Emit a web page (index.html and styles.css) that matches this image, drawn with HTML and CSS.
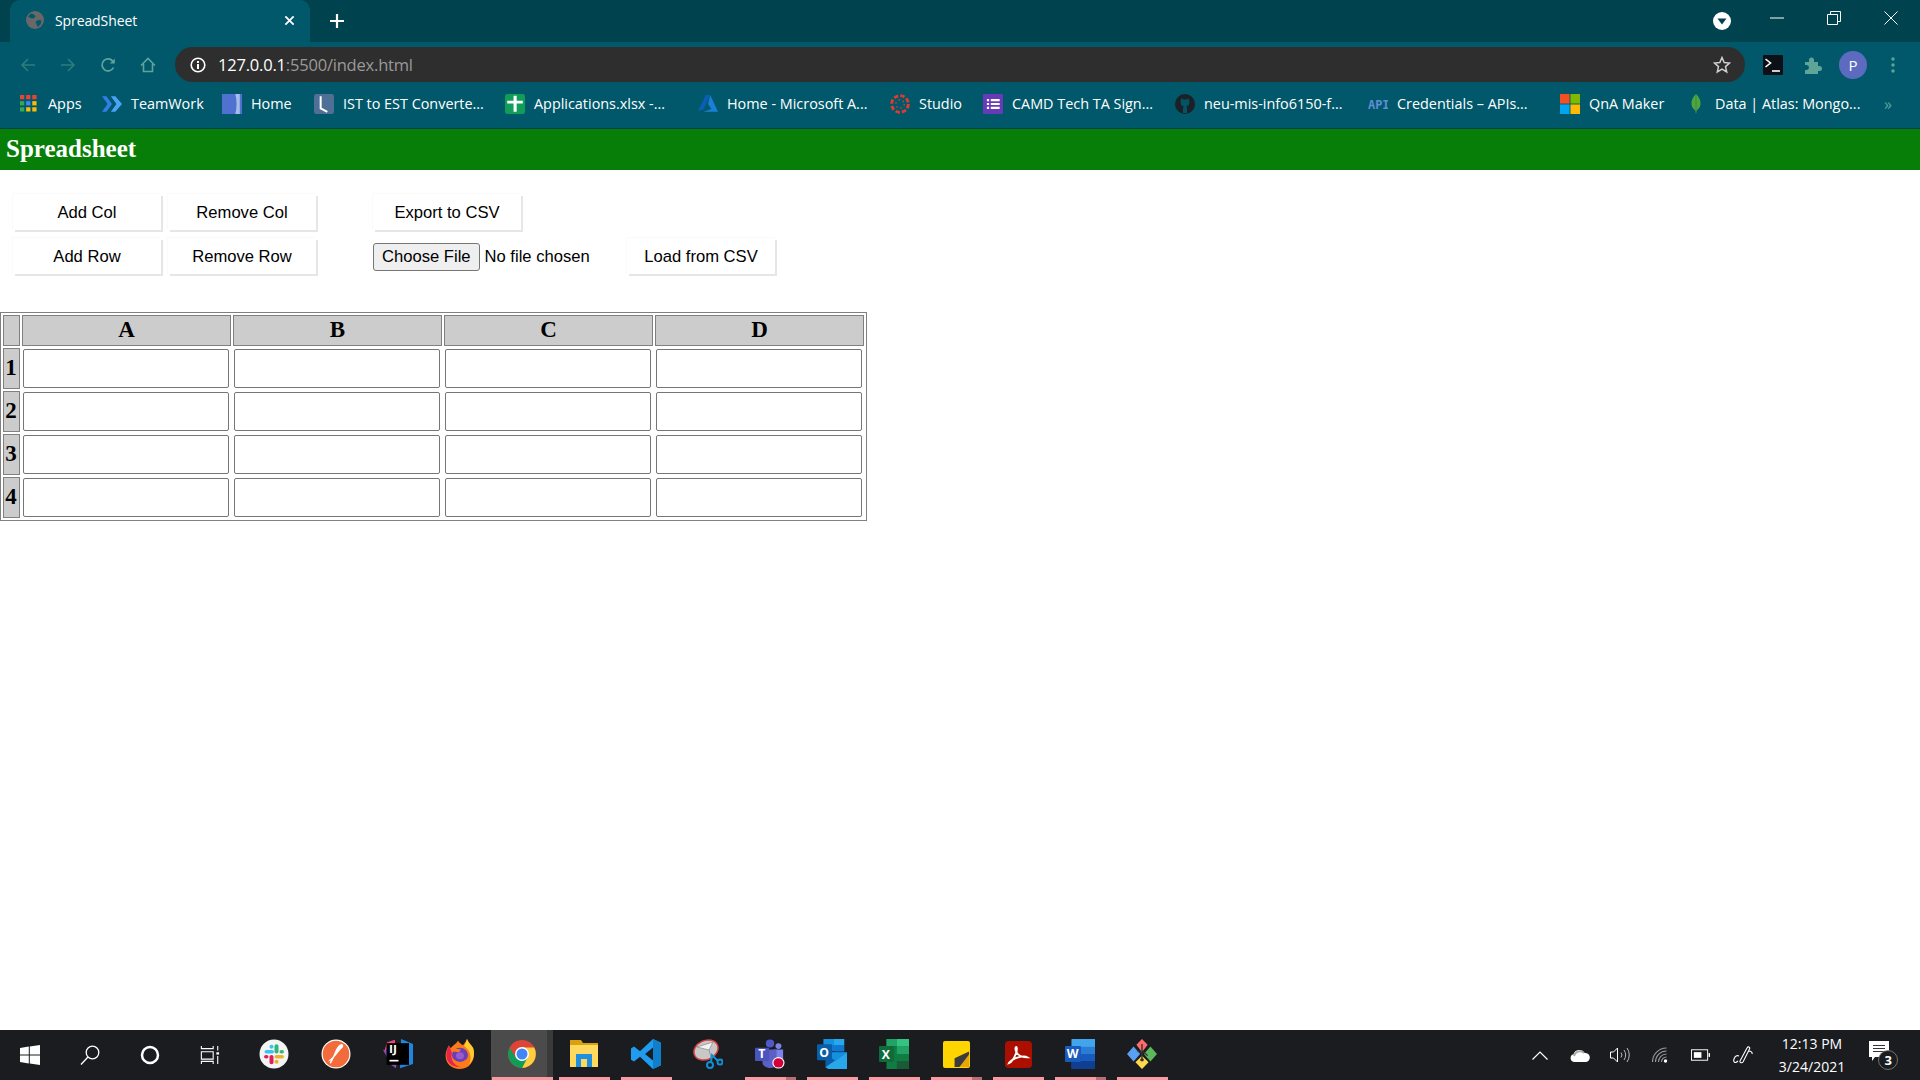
FILE: index.html
```html
<!DOCTYPE html>
<html lang="en">
<head>
<meta charset="utf-8">
<title>SpreadSheet</title>
<link rel="stylesheet" href="styles.css">
</head>
<body>
<div class="screen">
  <header class="tabstrip">
    <div class="tab">
      <svg class="favicon" viewBox="0 0 18 18"><circle cx="9" cy="9" r="9" fill="#686868"/><path d="M5 2.500l3 1 1.500 2-2 2-3-.5-2.500-1.500zM12 9l3.500.5-1 4-3 2.500-1-3-1-2z" fill="#01586b"/></svg>
      <span class="tab-title">SpreadSheet</span>
      <svg class="tab-close" viewBox="0 0 12 12"><path d="M1.500 1.500l9 9M10.500 1.500l-9 9" stroke="#fff" stroke-width="2"/></svg>
    </div>
    <svg class="new-tab" viewBox="0 0 16 16"><path d="M8 1v14M1 8h14" stroke="#fff" stroke-width="2.200"/></svg>
    <div class="window-controls">
      <svg class="media" viewBox="0 0 18 18"><circle cx="9" cy="9" r="9" fill="#fff"/><path d="M4.500 6.500h9L9 12.500z" fill="#01424f"/></svg>
      <svg class="winbtn" viewBox="0 0 14 14"><path d="M0 7h14" stroke="#fff"/></svg>
      <svg class="winbtn" viewBox="0 0 14 14"><path d="M.5 3.500h10v10H.5zM3.500 3.500V.5h10v10h-3" fill="none" stroke="#fff"/></svg>
      <svg class="winbtn" viewBox="0 0 14 14"><path d="M.5.5l13 13M13.500.5l-13 13" stroke="#fff"/></svg>
    </div>
  </header>

  <nav class="toolbar">
    <span class="tool"><svg viewBox="0 0 16 16" class="ico16"><path d="M15 8H2M8 2L2 8l6 6" fill="none" stroke="#2c7c80" stroke-width="1.600"/></svg></span>
    <span class="tool"><svg viewBox="0 0 16 16" class="ico16"><path d="M1 8h13M8 2l6 6-6 6" fill="none" stroke="#2c7c80" stroke-width="1.600"/></svg></span>
    <span class="tool"><svg viewBox="0 0 16 16" class="ico16"><path d="M13.500 10.500A6 6 0 1 1 13 4.500" fill="none" stroke="#5ea598" stroke-width="1.700"/><path d="M14.800 1.500v5h-5z" fill="#5ea598"/></svg></span>
    <span class="tool"><svg viewBox="0 0 16 16" class="ico16"><path d="M1 8.500L8 1.500l7 7M3.500 7v7.500h9V7" fill="none" stroke="#5ea598" stroke-width="1.600"/></svg></span>
    <div class="omnibox">
      <svg class="info" viewBox="0 0 16 16"><circle cx="8" cy="8" r="6.800" fill="none" stroke="#fff" stroke-width="1.600"/><path d="M7 7h2v5H7zM7 4h2v2H7z" fill="#fff"/></svg>
      <span class="url"><b class="host">127.0.0.1</b>:5500/index.html</span>
      <svg class="star" viewBox="0 0 18 18"><path d="M9 1.500l2.200 5 5.300.500-4 3.600 1.200 5.300L9 13.200l-4.700 2.700 1.200-5.300-4-3.600 5.300-.5z" fill="none" stroke="#cfcfcf" stroke-width="1.500"/></svg>
    </div>
    <div class="extensions">
      <span class="tool"><svg viewBox="0 0 20 20" class="ico20"><rect width="20" height="20" rx="1" fill="#0d1117"/><path d="M2.500 4l5 4-5 4" fill="none" stroke="#fff" stroke-width="1.600"/><path d="M9 16h8" stroke="#fff" stroke-width="1.600"/></svg></span>
      <span class="tool"><svg viewBox="0 0 18 18" class="ico18"><path d="M1 6h4V4a2.500 2.500 0 0 1 5 0v2h4v4h1.500a2.500 2.500 0 0 1 0 5H14v3H1v-4h1.500a2.500 2.500 0 0 0 0-5H1z" fill="#5ea598"/></svg></span>
      <span class="tool"><span class="avatar">P</span></span>
      <span class="tool"><svg viewBox="0 0 4 16" class="dots"><circle cx="2" cy="2" r="1.700" fill="#5ea598"/><circle cx="2" cy="8" r="1.700" fill="#5ea598"/><circle cx="2" cy="14" r="1.700" fill="#5ea598"/></svg></span>
    </div>
  </nav>

  <nav class="bookmarks">
    <a class="chip chip-apps"><svg viewBox="0 0 18 18" class="bm-apps"><path fill="#ea4335" d="M0 0h4.500v4.500H0zM6.500 0H11v4.500H6.500zM13 0h4.500v4.500H13z"/><path fill="#34a853" d="M0 6.500h4.500V11H0z"/><path fill="#4285f4" d="M6.500 6.500H11V11H6.500z"/><path fill="#fbbc05" d="M13 6.500h4.500V11H13z"/><path fill="#34a853" d="M0 13h4.500v4.500H0z"/><path fill="#fbbc05" d="M6.500 13H11v4.500H6.500zM13 13h4.500v4.500H13z"/></svg><span>Apps</span></a>
    <a class="chip"><svg viewBox="0 0 18 18" class="bm"><path d="M0 2h4l5 7-5 7H0l5-7z" fill="#2f7fe8"/><path d="M8 2h4l6 7-6 7H8l5-7z" fill="#4aa3f5"/></svg><span>TeamWork</span></a>
    <a class="chip"><svg viewBox="0 0 18 18" class="bm"><rect width="18" height="18" fill="#4f72d1"/><path d="M12 0h4v18h-4c1.500-6 1.500-12 0-18z" fill="#a8bce8"/></svg><span>Home</span></a>
    <a class="chip"><svg viewBox="0 0 18 18" class="bm"><rect width="18" height="18" rx="2" fill="#4f6f96"/><path d="M6 2v11l6 3" fill="none" stroke="#fff" stroke-width="1.800"/></svg><span>IST to EST Converte...</span></a>
    <a class="chip"><svg viewBox="0 0 18 18" class="bm"><rect width="18" height="18" rx="2" fill="#0f9d58"/><path d="M2 6h5.700V1.500h2.800V6H16v2.500h-5.500V16H7.700V8.500H2z" fill="#fff"/></svg><span>Applications.xlsx -...</span></a>
    <a class="chip"><svg viewBox="0 0 18 18" class="bm"><path d="M7 1h4L5 14l-5 1z" fill="#0a5fb4"/><path d="M11 1l7 15H5l7-2.500-3-4.500z" fill="#1a7fd6"/></svg><span>Home - Microsoft A...</span></a>
    <a class="chip"><svg viewBox="0 0 18 18" class="bm"><circle cx="9" cy="9" r="7.500" fill="none" stroke="#e13b2b" stroke-width="2.600" stroke-dasharray="4 1.900"/><circle cx="9" cy="9" r="3.800" fill="none" stroke="#e13b2b" stroke-width="1.200" stroke-dasharray="1.500 2.500"/></svg><span>Studio</span></a>
    <a class="chip"><svg viewBox="0 0 18 18" class="bm"><rect width="18" height="18" rx="1" fill="#673ab7"/><path fill="#fff" d="M3.500 4.500h2v2h-2zM7 4.500h8v2H7zM3.500 8h2v2h-2zM7 8h8v2H7zM3.500 11.500h2v2h-2zM7 11.500h8v2H7z"/></svg><span>CAMD Tech TA Sign...</span></a>
    <a class="chip"><svg viewBox="0 0 18 18" class="bm"><circle cx="9" cy="9" r="9" fill="#1b2126"/><path d="M5 7.500C5 5 6 4 6 4l2 1h2l2-1s1 1 1 3.500c0 2.500-1.500 3.500-3 3.800.6.500.8 1.200.8 2V17H7.200v-3.700c0-.8.200-1.500.8-2C6.500 11 5 10 5 7.500z" fill="#025566"/></svg><span>neu-mis-info6150-f...</span></a>
    <a class="chip"><svg viewBox="0 0 21 18" class="bm"><text x="0" y="14" class="api-text">API</text></svg><span>Credentials – APIs...</span></a>
    <a class="chip"><svg viewBox="0 0 18 18" class="bm"><path fill="#f25022" d="M0 0h8.600v8.600H0z"/><path fill="#7fba00" d="M9.400 0H18v8.600H9.400z"/><path fill="#00a4ef" d="M0 9.400h8.600V18H0z"/><path fill="#ffb900" d="M9.400 9.400H18V18H9.400z"/></svg><span>QnA Maker</span></a>
    <a class="chip"><svg viewBox="0 0 18 20" class="bm"><path d="M9 0c3 3 5 6.500 4.500 10.500-.3 3-2.500 5-3.800 6L9 20l-.7-3.500C7 15.500 4.800 13.500 4.500 10.500 4 6.500 6 3 9 0z" fill="#4ea643"/><path d="M9 1v18" stroke="#2f7f2a" stroke-width=".6"/></svg><span>Data | Atlas: Mongo...</span></a>
    <span class="more">»</span>
  </nav>

  <main class="page">
    <h1 class="title">Spreadsheet</h1>
    <section class="controls">
      <div class="control-row">
        <button class="btn">Add Col</button>
        <button class="btn">Remove Col</button>
        <button class="btn btn-io">Export to CSV</button>
      </div>
      <div class="control-row">
        <button class="btn">Add Row</button>
        <button class="btn">Remove Row</button>
        <input class="file" type="file">
        <button class="btn">Load from CSV</button>
      </div>
    </section>
    <table class="sheet">
      <thead><tr><th class="corner"></th><th>A</th><th>B</th><th>C</th><th>D</th></tr></thead>
      <tbody>
        <tr><th>1</th><td><input class="cell"></td><td><input class="cell"></td><td><input class="cell"></td><td><input class="cell"></td></tr>
        <tr><th>2</th><td><input class="cell"></td><td><input class="cell"></td><td><input class="cell"></td><td><input class="cell"></td></tr>
        <tr><th>3</th><td><input class="cell"></td><td><input class="cell"></td><td><input class="cell"></td><td><input class="cell"></td></tr>
        <tr><th>4</th><td><input class="cell"></td><td><input class="cell"></td><td><input class="cell"></td><td><input class="cell"></td></tr>
      </tbody>
    </table>
  </main>

  <footer class="taskbar">
    <div class="sys">
      <span class="sys-item"><svg viewBox="0 0 20 20" class="ico20"><path fill="#fff" d="M0 2.900l8.800-1.300v7.900H0zM9.800 1.500L20 0v9.500H9.800zM0 10.500h8.800v7.900L0 17.100zM9.800 10.500H20V20L9.800 18.500z"/></svg></span>
      <span class="sys-item"><svg viewBox="0 0 20 20" class="ico20"><circle cx="12.500" cy="7.500" r="6.300" fill="none" stroke="#fff" stroke-width="1.300"/><path d="M8 12L1 19.500" stroke="#fff" stroke-width="1.300"/></svg></span>
      <span class="sys-item"><svg viewBox="0 0 20 20" class="ico20"><circle cx="10" cy="10" r="8" fill="none" stroke="#fff" stroke-width="2.500"/></svg></span>
      <span class="sys-item"><svg viewBox="0 0 20 22" class="ico20"><path d="M.5 1v3h13V1M.5 7.500h13v8H.5zM.5 21v-3h13v3M18.500 1v5M18.500 12v9" fill="none" stroke="#fff" stroke-width="1.200"/><rect x="17" y="8" width="3" height="2.500" fill="#fff"/></svg></span>
    </div>
    <div class="apps">
      <span class="app"><svg viewBox="0 0 30 34" preserveAspectRatio="none" class="app-ico"><ellipse cx="15" cy="17" rx="14.500" ry="16.500" fill="#f4f4f4"/><path stroke-linecap="round" stroke-width="4" fill="none" stroke="#36c5f0" d="M7.500 14.500h5.500M12.500 8.500v.5"/><path stroke-linecap="round" stroke-width="4" fill="none" stroke="#2eb67d" d="M17.500 8v6.500M23 14.500h-.5"/><path stroke-linecap="round" stroke-width="4" fill="none" stroke="#ecb22e" d="M17.500 20h5.500M17.500 26v-.5"/><path stroke-linecap="round" stroke-width="4" fill="none" stroke="#e01e5a" d="M12.500 20v6.500M7 20h.5"/></svg></span>
      <span class="app"><svg viewBox="0 0 30 30" class="app-ico"><circle cx="15" cy="15" r="14.500" fill="#fff"/><circle cx="15" cy="15" r="13.300" fill="#f26b3a"/><path d="M21 5c2 1.300 1.500 3.500-1 5L13 18.500l-3 6-1.500-.5 1.500-2.500-3 1 5-5 3-7C17 7 19 4.500 21 5z" fill="#fff"/></svg></span>
      <span class="app"><svg viewBox="0 0 30 36" preserveAspectRatio="none" class="app-ico"><path d="M4 4l8-3v14L1 16z" fill="#f0447a"/><path d="M0 13l8 18 5 4 2-20z" fill="#8c4bb5"/><path d="M18 0l12 6v24l-13 5z" fill="#1f86e0"/><rect x="3.500" y="5" width="22.500" height="26" fill="#000"/><text x="6" y="17" class="ij-text">IJ</text><rect x="6.500" y="25" width="9" height="2" fill="#fff"/></svg></span>
      <span class="app"><svg viewBox="0 0 30 34" preserveAspectRatio="none" class="app-ico"><path d="M22 0c1 4 4 6 6 10 3 8 0 24-13 24C5 34-1 26 1 15c.5-3 2-6 3-8 0 2 1 3 2 3 2-3 6-5 7-8 2 3 3 4 5 5 1.500-2 3-4 4-7z" fill="#ff7a1a"/><path d="M22 0c1 4 4 6 6 10 2 6 1 14-4 19 3-7 2-16-5-21 1.500-2 2-5 3-8z" fill="#ffcb2e"/><path d="M4 7c-3 6-4 14 0 20 3 4 8 5 12 5-7-2-11-8-9-16z" fill="#e6254f"/><circle cx="15" cy="18" r="8" fill="#6b3fb5"/><circle cx="15" cy="19" r="4" fill="#9b59d0"/><path d="M6 14c3-3 7-3 10-2l-2 3z" fill="#ff7a1a"/></svg></span>
      <span class="app app-active"><svg viewBox="0 0 30 30" class="app-ico"><circle cx="15" cy="15" r="14" fill="#db4437"/><path d="M2.800 8.500A14 14 0 0 0 15 29l6.500-11.500L15 22 9 19z" fill="#0f9d58"/><path d="M15 29A14 14 0 0 0 27.200 8.500H15l6 6z" fill="#ffcd40"/><path d="M15 29l6.500-12-6 4-5.500-1z" fill="#0f9d58"/><circle cx="15" cy="15" r="7" fill="#fff"/><circle cx="15" cy="15" r="5.500" fill="#4285f4"/></svg></span>
      <span class="app run"><svg viewBox="0 0 30 30" class="app-ico"><path d="M1 1h11l2 3h15v24H1z" fill="#d8a111"/><path d="M1 6h28v22H1z" fill="#ffd95e"/><path d="M7 15h16v13h-5v-8h-6v8H7z" fill="#1f8fe0"/></svg></span>
      <span class="app run"><svg viewBox="0 0 30 32" preserveAspectRatio="none" class="app-ico"><path d="M22 0l8 4v24l-8 4L9 19l-6 5-3-2V10l3-2 6 5zM22 9l-8 7 8 7z" fill="#1f9cf0"/><path d="M22 0l8 4v24l-8 4z" fill="#0f7fcc"/></svg></span>
      <span class="app"><svg viewBox="0 0 30 30" class="app-ico"><ellipse cx="13" cy="11" rx="12.500" ry="9.500" transform="rotate(-25 13 11)" fill="#c8c8c8" stroke="#d64545" stroke-width="1.500"/><path d="M4 8l12 3 4-8zM16 11l2 7" fill="#f4f4f4" stroke="#777" stroke-width=".6"/><circle cx="17" cy="26" r="3" fill="none" stroke="#0f8fd6" stroke-width="2"/><circle cx="27" cy="23" r="2.500" fill="none" stroke="#0f8fd6" stroke-width="2"/><path d="M18 23l1-7 6 6" fill="none" stroke="#0f8fd6" stroke-width="2"/></svg></span>
      <span class="app run run-tail"><svg viewBox="0 0 32 34" preserveAspectRatio="none" class="app-ico"><circle cx="16" cy="5" r="4.500" fill="#5059c9"/><circle cx="25" cy="8" r="3.200" fill="#7b83eb"/><path d="M20 12h10v12c0 3-3 5-5 5h-5z" fill="#7b83eb"/><path d="M8 12h15v15c0 4-3 6-7 6s-8-3-8-6z" fill="#5b5fc7"/><rect y="10" width="15" height="15" rx="1" fill="#4b53bc"/><text x="3.500" y="22" class="ms-text">T</text><circle cx="25" cy="27" r="6.500" fill="#fff"/><circle cx="25" cy="27" r="5.300" fill="#d4003a"/></svg></span>
      <span class="app run"><svg viewBox="0 0 32 34" preserveAspectRatio="none" class="app-ico"><path d="M7 0h22v14H7z" fill="#0f78d4"/><path d="M7 0h11v7H7z" fill="#1490df"/><path d="M18 0h11v7H18z" fill="#28a8ea"/><path d="M18 7h11v7H18z" fill="#0f78d4"/><path d="M9 15h23v17H9z" fill="#0a5ea8"/><path d="M9 32l23-17v19H12z" fill="#28a8ea"/><path d="M32 15L20 25 9 17v-2z" fill="#1490df"/><rect y="6" width="16" height="18" rx="1" fill="#0a5ea8"/><text x="2.500" y="20.500" class="ms-text">O</text></svg></span>
      <span class="app run"><svg viewBox="0 0 32 34" preserveAspectRatio="none" class="app-ico"><path d="M8 0h24v34H8z" fill="#107c41"/><path d="M8 0h11v8H8z" fill="#21a366"/><path d="M19 0h13v8H19z" fill="#33c481"/><path d="M19 8h13v9H19z" fill="#21a366"/><path d="M19 25h13v9H19z" fill="#185c37"/><rect y="8" width="16" height="18" rx="1" fill="#0f6b3a"/><text x="3" y="22.500" class="ms-text">X</text></svg></span>
      <span class="app run run-tail"><svg viewBox="0 0 28 28" class="app-ico-sm"><rect width="28" height="28" rx="2" fill="#ffd400"/><path d="M12 27V18L27 11v14c0 1-1 2-2 2z" fill="#3b3b3b"/><path d="M27 14L17 27h8c1 0 2-1 2-2z" fill="#e8a40c"/></svg></span>
      <span class="app run"><svg viewBox="0 0 28 28" class="app-ico-sm"><rect width="28" height="28" rx="4" fill="#ac0f00"/><path d="M4 23c3-1 6-6 8-12 .6-3 .5-5-.5-5s-1 3 0 5c2 4 6 6 12 6-3-2-8-1-13 1-4 2-6 4-6.500 5z" fill="none" stroke="#fff" stroke-width="1.800"/></svg></span>
      <span class="app run run-tail"><svg viewBox="0 0 32 34" preserveAspectRatio="none" class="app-ico"><rect x="7" width="25" height="34" rx="1" fill="#185abd"/><path d="M7 0h25v9H7z" fill="#41a5ee"/><path d="M7 9h25v8H7z" fill="#2b7cd3"/><path d="M7 25h25v9H7z" fill="#103f91"/><rect y="8" width="17" height="18" rx="1" fill="#185abd"/><text x="1.800" y="22" class="ms-text">W</text></svg></span>
      <span class="app run"><svg viewBox="0 0 32 36" preserveAspectRatio="none" class="app-ico"><path d="M16 0l6 7-6 9-6-9z" fill="#ff6b6b"/><path d="M7 9l7 9-7 9-7-9z" fill="#5aa0f2"/><path d="M25 9l7 9-7 9-7-9z" fill="#5cb85c"/><path d="M16 20l7 8-7 8-7-8z" fill="#ffd84d"/><path d="M16 6v18M16 14l6 6M16 17l-5-3" stroke="#333" stroke-width="1.500"/><circle cx="16" cy="25" r="2" fill="#333"/></svg></span>
    </div>
    <div class="tray">
      <span class="tray-item"><svg viewBox="0 0 16 9" class="tray-chev"><path d="M.5 8.500L8 1l7.500 7.500" fill="none" stroke="#fff" stroke-width="1.200"/></svg></span>
      <span class="tray-item"><svg viewBox="0 0 20 13" class="tray-cloud"><path d="M4 13a4 4 0 0 1-.5-7.800A6 6 0 0 1 14.500 4 4.500 4.500 0 0 1 16 13z" fill="#fff"/><path d="M4 7a6 6 0 0 1 10-3" fill="none" stroke="#aaa" stroke-width="2"/></svg></span>
      <span class="tray-item"><svg viewBox="0 0 20 16" class="tray-vol"><path d="M.5 5h3l4-4v14l-4-4h-3z" fill="none" stroke="#fff"/><path d="M11 5.500a4 4 0 0 1 0 5M14 3a9 9 0 0 1 0 10M17 1a12 12 0 0 1 0 14" fill="none" stroke="#bbb"/></svg></span>
      <span class="tray-item"><svg viewBox="0 0 16 16" class="tray-wifi"><path d="M.5 15A14 14 0 0 1 14.500 1M3.500 15A11 11 0 0 1 14.500 4M6.500 15A8 8 0 0 1 14.500 7M9.500 15A5 5 0 0 1 14.500 10" fill="none" stroke="#9a9a9a" stroke-width="1.100"/><circle cx="13.500" cy="14" r="1.700" fill="#fff"/></svg></span>
      <span class="tray-item"><svg viewBox="0 0 20 12" class="tray-bat"><rect x=".5" y=".5" width="17" height="11" fill="none" stroke="#fff"/><rect x="3" y="3" width="8" height="6" fill="#fff"/><rect x="18.500" y="4" width="1.500" height="4" fill="#fff"/></svg></span>
      <span class="tray-item tray-pen"><svg viewBox="0 0 20 20" class="ico20"><path d="M5 16c-3 3-5 1-4-2s3-4 5-3M7 16L14 3c1-2 3.500-1 2.500 1L10 17c-1 1.500-3.500.5-3-1zM15.500 6c2.500 0 4 1.500 3.500 3" fill="none" stroke="#fff" stroke-width="1.100"/></svg></span>
      <div class="clock"><span>12:13 PM</span><span>3/24/2021</span></div>
      <span class="tray-item notif"><svg viewBox="0 0 30 30" class="notif-ico"><path d="M1 1h20v16H7l-3 4v-4H1z" fill="#fff"/><path d="M5 5.500h12M5 8.500h12M5 11.500h12" stroke="#333"/><circle cx="20" cy="20" r="9.500" fill="#1b1c1f" stroke="#888" stroke-width=".8"/><text x="16.500" y="25" class="notif-text">3</text></svg></span>
    </div>
  </footer>
</div>
</body>
</html>
```

FILE: styles.css
```css
* { box-sizing: border-box; }
html, body { margin: 0; padding: 0; height: 100%; }
body { font-family: "Liberation Sans", Arial, sans-serif; }
.screen { width: 1920px; height: 1080px; display: flex; flex-direction: column; overflow: hidden; background: #fff; }

/* browser chrome */
.tabstrip { height: 42px; background: #01424f; display: flex; align-items: flex-end; padding-left: 10px; color: #fff; flex: none; }
.tab { width: 300px; height: 42px; background: #01586b; border-radius: 10px 10px 0 0; display: flex; align-items: center; padding-left: 16px; padding-bottom: 2px; }
.favicon { width: 18px; height: 18px; flex: none; }
.tab-title { font: 14px "Open Sans", sans-serif; margin-left: 11px; flex: 1; letter-spacing: -0.1px; }
.tab-close { width: 11px; height: 11px; margin-right: 15px; }
.new-tab { width: 16px; height: 16px; margin-left: 19px; align-self: center; }
.window-controls { margin-left: auto; height: 42px; display: flex; align-items: flex-start; padding-right: 22px; }
.media { width: 18px; height: 18px; margin-top: 12px; margin-right: 39px; }
.winbtn { width: 14px; height: 14px; margin-top: 11px; margin-right: 43px; }
.winbtn:last-child { margin-right: 0; }

.toolbar { height: 40px; background: #01586b; display: flex; align-items: flex-end; padding-left: 8px; flex: none; }
.tool { width: 40px; height: 35px; display: flex; align-items: center; justify-content: center; flex: none; }
.ico16 { width: 16px; height: 16px; }
.ico18 { width: 18px; height: 18px; }
.ico20 { width: 20px; height: 20px; }
.dots { width: 4px; height: 16px; }
.omnibox { flex: 1; height: 35px; margin-left: 7px; background: #2e2e2e; border-radius: 18px; display: flex; align-items: center; padding: 0 13px 0 15px; }
.info { width: 16px; height: 16px; flex: none; }
.url { font: 16.500px "Open Sans", sans-serif; color: #9a9a9a; margin-left: 12px; letter-spacing: -0.2px; flex: 1; }
.host { color: #fff; font-weight: 400; }
.star { width: 18px; height: 18px; flex: none; margin-right: 1px; }
.extensions { display: flex; margin-left: 8px; padding-right: 7px; }
.avatar { width: 28px; height: 28px; border-radius: 50%; background: #5c6bc0; color: #fff; font: 15px "Open Sans", sans-serif; display: flex; align-items: center; justify-content: center; }

.bookmarks { height: 47px; background: #01586b; border-bottom: 1px solid #01424f; display: grid; grid-template-columns: 82px 120px 92px 191px 193px 192px 93px 192px 193px 192px 126px 198px 1fr; align-items: center; padding-left: 20px; padding-bottom: 3px; flex: none; color: #fff; font: 14.400px "Open Sans", sans-serif; letter-spacing: 0; }
.chip { display: flex; align-items: center; gap: 9px; white-space: nowrap; }
.chip-apps { gap: 11px; }
.bm { width: 20px; height: 20px; flex: none; }
.bm-apps { width: 17px; height: 17px; flex: none; }
.more { color: #5ea598; font-size: 16px; padding-left: 0; }
.api-text { font: bold 12.500px "DejaVu Sans Mono", monospace; fill: #5f8dd3; }

/* page */
.page { flex: 1; min-height: 0; background: #fff; }
.title { margin: 0; height: 41px; background: #077e07; color: #fff; font: bold 25px "Liberation Serif", serif; padding: 6px 0 0 6px; }
.controls { padding: 24px 0 0 13px; display: flex; flex-direction: column; gap: 8px; height: 142px; }
.control-row { display: flex; align-items: center; gap: 7px; height: 36px; }
.btn { width: 148px; height: 36px; background: #fff; border: none; box-shadow: 2px 2px 0 #e6e6e6, -1px -1px 0 #fafafa; font: 16.600px "Liberation Sans", sans-serif; color: #000; padding: 2px 0 0; }
.btn-io { margin-left: 50px; }
.file { font: 16.600px "Liberation Sans", sans-serif; margin: 2px 0 0 50px; width: 247px; color: #000; }
.file::file-selector-button { height: 28px; padding: 0 8px; margin-right: 5px; font: 16.600px "Liberation Sans", sans-serif; background: #efefef; border: 1px solid #767676; border-radius: 3px; color: #000; }

.sheet { border: 1px solid #808080; border-spacing: 2px; border-collapse: separate; font-family: "Liberation Serif", serif; }
.sheet th { background: #ccc; border: 1px solid #808080; padding: 0 0 2px; font: bold 23px/1 "Liberation Serif", serif; color: #000; }
.sheet thead th { height: 31px; width: 209px; }
.sheet thead .corner { width: 17px; }
.sheet tbody th { padding-right: 1px; }
.sheet td { border: 1px solid #fff; padding: 0; height: 41px; width: 209px; }
.cell { display: block; width: 206px; height: 39px; border: 1px solid #767676; border-radius: 2px; background: #fff; padding: 0; }

/* taskbar */
.taskbar { height: 50px; background: #1b1c1f; display: flex; flex: none; position: relative; color: #fff; }
.sys { display: flex; }
.sys-item { width: 60px; height: 50px; display: flex; align-items: center; justify-content: center; }
.apps { display: flex; margin-left: 3px; }
.app { width: 62px; height: 50px; display: flex; align-items: center; justify-content: center; padding-bottom: 2px; position: relative; }
.app-ico { width: 30px; height: 30px; }
.app-ico-sm { width: 27px; height: 27px; }
.app-active { background: linear-gradient(to right, #4b4b4b 0 56px, #3a3a3a 56px); }
.app-active::after { content: ""; position: absolute; left: 1px; bottom: 0; width: 61px; height: 3px; background: #f89aa0; }
.run::after { content: ""; position: absolute; left: 6px; bottom: 0; width: 51px; height: 3px; background: #f89aa0; }
.run-tail::after { background: linear-gradient(to right, #f89aa0 0 41px, #b76f77 41px); }
.ms-text { font: bold 13px "Open Sans", sans-serif; fill: #fff; }
.ij-text { font: bold 12px "Open Sans", sans-serif; fill: #fff; }
.tray { margin-left: auto; width: 400px; display: flex; }
.tray-item { width: 40px; height: 50px; display: flex; align-items: center; justify-content: center; flex: none; }
.tray-chev { width: 16px; height: 9px; }
.tray-cloud { width: 20px; height: 13px; }
.tray-vol { width: 20px; height: 16px; }
.tray-wifi { width: 16px; height: 16px; }
.tray-bat { width: 19px; height: 12px; }
.tray-pen { width: 45px; }
.clock { width: 94px; display: flex; flex-direction: column; align-items: center; justify-content: center; gap: 4px; font: 14px/19px "Open Sans", sans-serif; }
.notif { width: 40px; }
.notif-ico { width: 30px; height: 30px; margin-left: 8px; }
.notif-text { font: bold 13px "Open Sans", sans-serif; fill: #fff; }
```
